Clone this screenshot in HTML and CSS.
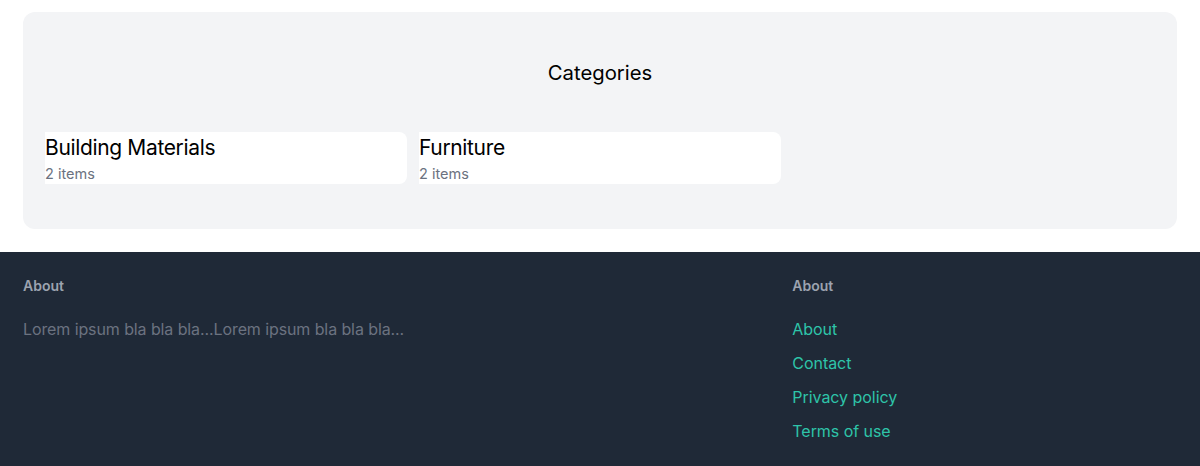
FILE: index.html
```html
<!DOCTYPE html>
<html>
<head>
<meta charset="utf-8">
<link rel="stylesheet" href="styles.css">
</head>
<body>
<main class="page">
  <section class="categories">
    <h2 class="categories-title">Categories</h2>
    <div class="cat-grid">
      <a class="cat-card">
        <div class="cat-name">Building Materials</div>
        <div class="cat-count">2 items</div>
      </a>
      <a class="cat-card">
        <div class="cat-name">Furniture</div>
        <div class="cat-count">2 items</div>
      </a>
    </div>
  </section>
</main>
<footer class="footer">
  <div class="footer-inner">
    <div class="footer-about">
      <h3 class="footer-heading">About</h3>
      <p class="footer-text">Lorem ipsum bla bla bla...Lorem ipsum bla bla bla...</p>
    </div>
    <div class="footer-links">
      <h3 class="footer-heading">About</h3>
      <ul class="link-list">
        <li><a class="footer-link">About</a></li>
        <li><a class="footer-link">Contact</a></li>
        <li><a class="footer-link">Privacy policy</a></li>
        <li><a class="footer-link">Terms of use</a></li>
      </ul>
    </div>
  </div>
</footer>
</body>
</html>
```
FILE: styles.css
```css
* { box-sizing: border-box; }
html, body { margin: 0; padding: 0; }
body {
  font-family: Inter, "Noto Sans", "Liberation Sans", sans-serif;
  background: #ffffff;
  color: #000;
}
.page {
  padding: 12px 23px 23px;
}
.categories {
  background: #f3f4f6;
  border-radius: 12px;
  padding: 47px 22px 45px;
}
.categories-title {
  margin: 0 0 45px;
  text-align: center;
  font-size: 20.3px;
  line-height: 28px;
  font-weight: 400;
}
.cat-grid {
  display: grid;
  grid-template-columns: repeat(3, 1fr);
  gap: 12px;
}
.cat-card {
  display: block;
  background: #ffffff;
  border-radius: 0 8px 8px 0;
  height: 52px;
}
.cat-name {
  font-size: 21px;
  line-height: 31px;
  letter-spacing: -0.35px;
}
.cat-count {
  font-size: 14.5px;
  line-height: 21px;
  color: #6b7280;
}
.footer {
  background: #1f2937;
  height: 214px;
}
.footer-inner {
  display: grid;
  grid-template-columns: 2fr 1fr;
  padding: 24px 23px 0;
}
.footer-heading {
  margin: 0 0 21px;
  font-size: 14px;
  line-height: 20px;
  font-weight: 600;
  color: #9ca3af;
}
.footer-text {
  margin: 0;
  font-size: 16px;
  line-height: 24px;
  letter-spacing: -0.1px;
  color: #6b7280;
}
.link-list {
  list-style: none;
  margin: 0;
  padding: 0;
  display: flex;
  flex-direction: column;
  gap: 10px;
}
.footer-link {
  font-size: 16px;
  line-height: 24px;
  letter-spacing: -0.05px;
  color: #2ec4a9;
}
```
